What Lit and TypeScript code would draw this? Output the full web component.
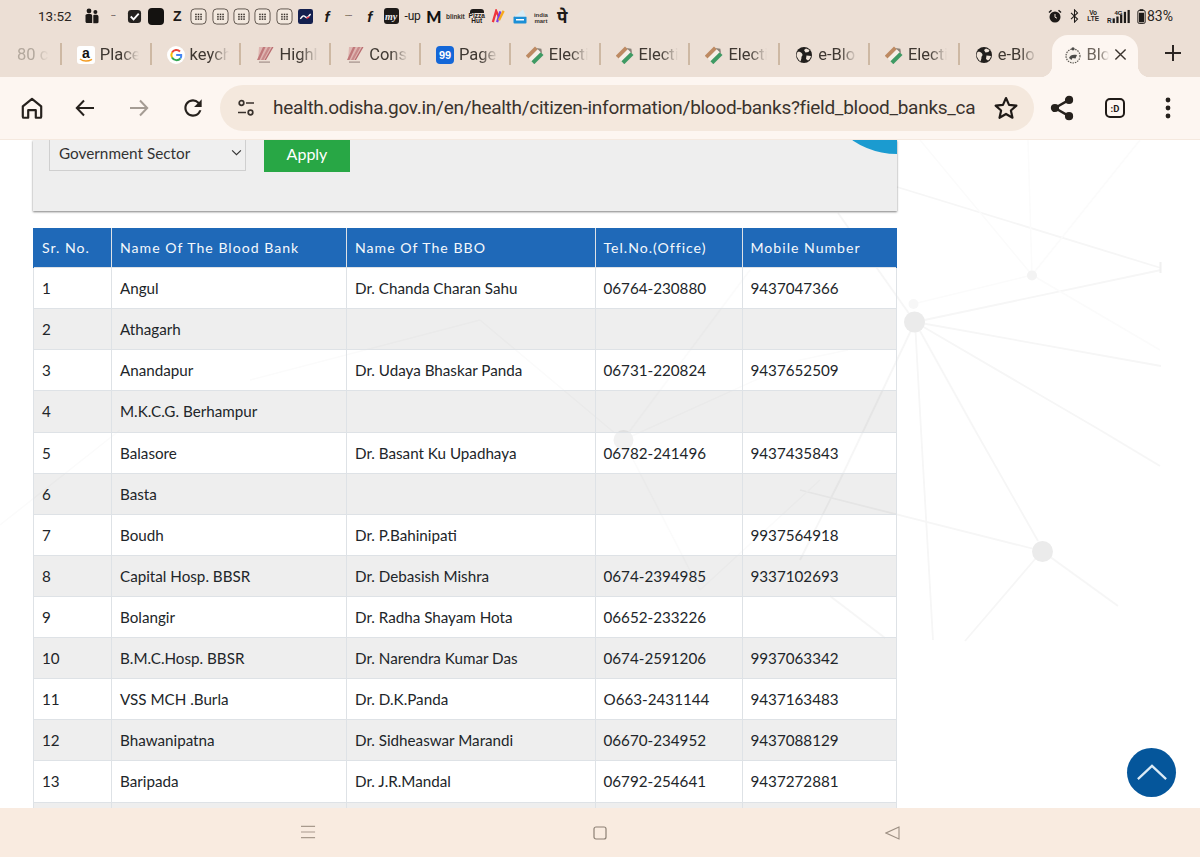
import { LitElement, html, css, svg, nothing } from "lit";
import { customElement } from "lit/decorators.js";

type Row = [string, string, string, string, string];
const rows: Row[] = [
  ["1", "Angul", "Dr. Chanda Charan Sahu", "06764-230880", "9437047366"],
  ["2", "Athagarh", "", "", ""],
  ["3", "Anandapur", "Dr. Udaya Bhaskar Panda", "06731-220824", "9437652509"],
  ["4", "M.K.C.G. Berhampur", "", "", ""],
  ["5", "Balasore", "Dr. Basant Ku Upadhaya", "06782-241496", "9437435843"],
  ["6", "Basta", "", "", ""],
  ["7", "Boudh", "Dr. P.Bahinipati", "", "9937564918"],
  ["8", "Capital Hosp. BBSR", "Dr. Debasish Mishra", "0674-2394985", "9337102693"],
  ["9", "Bolangir", "Dr. Radha Shayam Hota", "06652-233226", ""],
  ["10", "B.M.C.Hosp. BBSR", "Dr. Narendra Kumar Das", "0674-2591206", "9937063342"],
  ["11", "VSS MCH .Burla", "Dr. D.K.Panda", "O663-2431144", "9437163483"],
  ["12", "Bhawanipatna", "Dr. Sidheaswar Marandi", "06670-234952", "9437088129"],
  ["13", "Baripada", "Dr. J.R.Mandal", "06792-254641", "9437272881"],
  ["", "", "", "", ""],
];

const gridBox = html`<svg viewBox="0 0 18 18" width="17" height="17"><rect x="1" y="1" width="16" height="16" rx="4" fill="#f3e9df" stroke="#5a5048" stroke-width="1"/><g fill="#3a332d"><rect x="5.5" y="6" width="1.6" height="1.6"/><rect x="8.2" y="6" width="1.6" height="1.6"/><rect x="10.9" y="6" width="1.6" height="1.6"/><rect x="5.5" y="8.5" width="1.6" height="1.6"/><rect x="8.2" y="8.5" width="1.6" height="1.6"/><rect x="10.9" y="8.5" width="1.6" height="1.6"/><rect x="5.5" y="11" width="1.6" height="1.6"/><rect x="8.2" y="11" width="1.6" height="1.6"/><rect x="10.9" y="11" width="1.6" height="1.6"/></g></svg>`;

const statusIcons = [
  html`<svg viewBox="0 0 14 16" width="14" height="16" fill="#1d1a18"><circle cx="4" cy="3" r="2.4"/><circle cx="10.4" cy="4" r="2"/><path d="M.5 7.5C.5 6 2 6 4 6s3.2.2 3.2 2v7H2c-1 0-1.5-.6-1.5-1.5z"/><path d="M8.3 7.2c.6-.4 1.2-.5 2.1-.5 1.8 0 3.1.3 3.1 2V14c0 .7-.5 1.2-1.2 1.2H8.3z"/></svg>`,
  html`<span class="mini dash">•••••</span>`,
  html`<svg viewBox="0 0 16 16" width="15" height="15"><rect x="1" y="1" width="14" height="14" rx="3.5" fill="#24211f"/><path d="M4 8l3 3 5.5-6" fill="none" stroke="#fff" stroke-width="2"/></svg>`,
  html`<span class="blk"></span>`,
  html`<span class="zed">Z</span>`,
  gridBox, gridBox, gridBox, gridBox, gridBox,
  html`<svg viewBox="0 0 16 16" width="15" height="15"><rect width="16" height="16" rx="2.5" fill="#14204f"/><path d="M2.5 10.5C5 7 6 6.5 8 8.5s3-1 5.5-3" fill="none" stroke="#fff" stroke-width="1.5"/><path d="M9 10l3-1.5" stroke="#e34" stroke-width="1.5"/></svg>`,
  html`<span class="fk">f</span>`,
  html`<span class="mini dash2">•••••••</span>`,
  html`<span class="fk">f</span>`,
  html`<span class="my">my</span>`,
  html`<span class="up">-up</span>`,
  html`<span class="em">M</span>`,
  html`<span class="blinkit">blinkit</span>`,
  html`<span class="pizza"><i></i>Pizza<br />Hut</span>`,
  html`<svg viewBox="0 0 16 16" width="15" height="15"><path d="M2 14L5.5 2 9 10" fill="none" stroke="#f0353b" stroke-width="2.4"/><path d="M6.5 14L10 2.5" stroke="#7a3ee0" stroke-width="2.4"/><path d="M8.5 12L13.5 2" stroke="#f7a81b" stroke-width="2.4"/></svg>`,
  html`<svg viewBox="0 0 16 16" width="16" height="16"><rect x="1.5" y="8.5" width="13" height="7" rx="1" fill="#1c8fd6"/><path d="M2.5 8.5L11 1.5l3 7z" fill="#d7ecf6"/><rect x="4" y="11" width="8" height="1.5" fill="#fff"/></svg>`,
  html`<span class="india"><b>india</b><br /><b>mart</b></span>`,
  html`<span class="pe">पे</span>`,
];

const amazon = html`<svg viewBox="0 0 18 18" width="18" height="18"><rect width="18" height="18" rx="3" fill="#fff"/><text x="9" y="11.5" text-anchor="middle" font-family="Liberation Sans" font-weight="700" font-size="14" fill="#111">a</text><path d="M3 13c3.5 2.6 8 2.6 12 .3" fill="none" stroke="#f39a1f" stroke-width="1.5"/></svg>`;
const google = html`<svg viewBox="0 0 18 18" width="18" height="18"><circle cx="9" cy="9" r="9" fill="#fff"/><path d="M13 5.5A5.2 5.2 0 0 0 5 6.5" fill="none" stroke="#ea4335" stroke-width="2"/><path d="M5 6.5a5.2 5.2 0 0 0 0 5" fill="none" stroke="#fbbc05" stroke-width="2"/><path d="M5 11.5a5.2 5.2 0 0 0 8.5.8" fill="none" stroke="#34a853" stroke-width="2"/><path d="M13.5 12.3A5 5 0 0 0 14.2 9H9.2" fill="none" stroke="#4285f4" stroke-width="2"/></svg>`;
const pinkZ = html`<svg viewBox="0 0 18 18" width="18" height="18"><path d="M3 1h14L9 14H2z" fill="#dfb6b2"/><path d="M7 1h2.5L3.5 14H1z" fill="#c0787a"/><path d="M12 1h2.5L7.5 14H5z" fill="#c98a8a"/><path d="M16 1h1.5L10 14H8.5z" fill="#b96c70"/><rect x="3" y="15.5" width="11" height="1.2" fill="#a3908a"/></svg>`;
const ninetyNine = html`<svg viewBox="0 0 18 18" width="18" height="18"><rect width="18" height="18" rx="4" fill="#1467d8"/><text x="9" y="13" text-anchor="middle" font-family="Liberation Sans" font-weight="700" font-size="11" fill="#fff">99</text></svg>`;
const election = html`<svg viewBox="0 0 18 18" width="18" height="18"><g transform="rotate(45 9 9)"><rect x="3" y="3" width="4" height="13" fill="#bd8a62"/><rect x="7" y="2" width="4" height="14" fill="#f5eee6"/><rect x="11" y="3" width="4" height="13" fill="#3f9a63"/><path d="M5 3l4-3 4 3z" fill="#8b8279"/></g></svg>`;
const globe = html`<svg viewBox="0 0 18 18" width="18" height="18"><circle cx="9" cy="9" r="8" fill="#211e1c"/><path d="M2.5 6C4 5.5 6 6 7 7.5c1.5 2.5-1 2.5-.5 4.5l-1 3.5C3.5 14 1.8 11 1.5 9zM11 2.5l3.5 1.5-1 2-3 .5-1.5-2.5zM11.5 9.5l4.5.5c-.5 2-1.5 3.5-3 4.5l-2-1.500z" fill="#f0e4d9"/></svg>`;
const emblem = html`<svg viewBox="0 0 18 18" width="18" height="18"><circle cx="9" cy="10" r="7" fill="#f6f0ea" stroke="#5a5650" stroke-width="1.2" stroke-dasharray="1.5 1"/><path d="M5 12c1-3 4-4 8-3l-1.5 3.5-3-.5-1 2z" fill="#4b4a48"/><circle cx="9" cy="2.8" r="1.6" fill="#4b4a48"/></svg>`;

const tabs = [
  { ic: nothing, t: "80 c", dim: true },
  { ic: amazon, t: "Place" },
  { ic: google, t: "keych" },
  { ic: pinkZ, t: "Highl" },
  { ic: pinkZ, t: "Consu" },
  { ic: ninetyNine, t: "Page" },
  { ic: election, t: "Electi" },
  { ic: election, t: "Electi" },
  { ic: election, t: "Electi" },
  { ic: globe, t: "e-Blo" },
  { ic: election, t: "Electi" },
  { ic: globe, t: "e-Blo" },
];

const mainLines: [number, number, number, number][] = [
  [897, 187, 1161, 268], [915, 322, 1161, 270], [915, 322, 1161, 366], [915, 322, 921, 430], [921, 430, 933, 640],
  [915, 322, 975, 430], [975, 430, 1038, 541], [915, 322, 1100, 430], [1100, 430, 1160, 466], [915, 322, 838, 213],
  [915, 322, 840, 480], [840, 480, 800, 560], [1042, 551, 800, 490], [1042, 551, 965, 641], [1042, 551, 1118, 606],
  [830, 596, 885, 638],
];
const faintLines: [number, number, number, number][] = [
  [1032, 275, 1028, 140], [1032, 275, 1140, 140], [1032, 275, 913, 304], [1032, 275, 1160, 350], [1032, 275, 920, 140],
  [800, 360, 848, 350], [623, 440, 800, 360], [623, 440, 700, 590], [623, 440, 480, 320], [623, 440, 750, 270],
  [700, 590, 820, 480], [0, 525, 120, 430], [480, 320, 250, 380],
];

@customElement("app-root")
export class AppRoot extends LitElement {
  static styles = css`
    :host { display: flex; flex-direction: column; width: 1200px; height: 857px; overflow: hidden; background: #fff; font-family: Lato, "Noto Sans", sans-serif; color: #212529; }
    .chrome { background: #ecdfd5; flex: none; position: relative; z-index: 3; font-family: Roboto, "Noto Sans", sans-serif; }
    .status { height: 34px; box-sizing: border-box; padding-bottom: 2px; display: flex; align-items: center; padding-left: 38px; color: #2a2522; }
    .time { width: 43px; flex: none; font-size: 13.5px; }
    .slot { width: 21.4px; flex: none; display: flex; align-items: center; justify-content: center; height: 22px; overflow: visible; white-space: nowrap; }
    .mini { font-size: 6px; letter-spacing: -1px; color: #3a332d; font-weight: 700; line-height: 1; }
    .dash { font-size: 4px; letter-spacing: -.6px; }
    .dash2 { font-size: 4px; letter-spacing: -.5px; }
    .blk { width: 16px; height: 17px; border-radius: 4px; background: #141210; display: block; }
    .zed { font: 700 14px "Liberation Sans", sans-serif; color: #1d1a18; }
    .fk { font: italic 700 15px "Liberation Sans", sans-serif; color: #1d1a18; }
    .my { width: 15px; height: 16px; border-radius: 3px; background: #1d1a18; color: #eee; font: italic 700 10px "Liberation Serif", serif; display: flex; align-items: center; justify-content: center; }
    .up { font: 400 12px Roboto, sans-serif; color: #1d1a18; letter-spacing: -.2px; }
    .em { font: 900 16px Lato, sans-serif; color: #111; }
    .blinkit { font: 700 6.5px "Liberation Sans", sans-serif; color: #3a332d; letter-spacing: -.1px; }
    .pizza { font: 700 6.5px/5.5px "Liberation Sans", sans-serif; color: #1d1a18; text-align: center; position: relative; padding-top: 4px; }
    .pizza i { position: absolute; top: 0; left: 1px; right: 1px; height: 4px; background: #1d1a18; border-radius: 3px 3px 0 0; }
    .india { font: 700 6px/6px "Liberation Sans", sans-serif; text-align: center; color: #3a332d; padding-top: 3px; }
    .pe { font: 700 17px "Noto Sans", "DejaVu Sans", sans-serif; color: #1d1a18; }
    .right { margin-left: auto; display: flex; align-items: center; padding-right: 27px; gap: 0; }
    .alarm { margin-right: 8px; display: block; }
    .bt { margin-right: 8px; display: block; }
    .volte { font: 700 6.5px/6.5px "Liberation Sans", sans-serif; color: #2a2522; margin-right: 8px; text-align: center; }
    .sig { display: block; margin-right: 2px; }
    .pct { font-size: 14px; color: #2a2522; margin-left: 1px; }

    .tabs { height: 43px; display: flex; align-items: stretch; margin-left: -28px; }
    .tab { width: 89.8px; flex: none; box-sizing: border-box; display: flex; align-items: center; padding-left: 15px; padding-bottom: 2px; position: relative; gap: 5px; color: #3f3832; font-size: 16.5px; }
    .tab::after { content: ""; position: absolute; right: 0; top: 9px; height: 22px; width: 2px; background: #cdb8a3; }
    .tab.nosep::after { display: none; }
    .tab svg { flex: none; display: block; }
    .lbl { width: 39px; overflow: hidden; white-space: nowrap; -webkit-mask-image: linear-gradient(90deg, #000 55%, transparent 100%); mask-image: linear-gradient(90deg, #000 55%, transparent 100%); }
    .tab.dim { padding-left: 45px; color: #b3a89d; }
    .tab.dim .lbl { width: 32px; }
    .active { width: 86px; flex: none; margin: 1px 0 0 2px; background: #fdf6f1; border-radius: 16px 16px 0 0; display: flex; align-items: center; box-sizing: border-box; padding: 0 8px 3px 12px; gap: 5px; position: relative; color: #6f665e; font-size: 16.5px; }
    .active::before, .active::after { content: ""; position: absolute; bottom: 0; width: 12px; height: 12px; }
    .active::before { left: -12px; background: radial-gradient(circle at 0 0, transparent 12px, #fdf6f1 12.5px); }
    .active::after { right: -12px; background: radial-gradient(circle at 100% 0, transparent 12px, #fdf6f1 12.5px); }
    .active .lbl { width: 22px; flex: none; }
    .active svg { display: block; flex: none; }
    .plus { margin-left: 26px; display: flex; align-items: center; padding-bottom: 5px; }

    .toolbar { height: 63px; background: #fdf6f1; display: flex; align-items: center; box-sizing: border-box; border-bottom: 1px solid #f5e9df; position: relative; padding-bottom: 1px; }
    .tb { width: 54px; flex: none; display: flex; align-items: center; justify-content: center; }
    .tb svg { display: block; }
    .tb.first { margin-left: 5px; margin-right: -1px; }
    .tb.share { margin-left: 1px; }
    .tb.tight { margin-left: -1px; }
    .omni { width: 814px; height: 46px; flex: none; background: #f4e8dd; border-radius: 23px; display: flex; align-items: center; box-sizing: border-box; padding: 0 15px 0 16px; }
    .omni .url { flex: 1; font-size: 19px; color: #3a332d; margin-left: 17px; white-space: nowrap; overflow: hidden; letter-spacing: -.28px; font-family: Roboto, sans-serif; }
    .omni .star { margin-left: 10px; flex: none; }

    main { flex: 1; min-height: 0; position: relative; overflow: hidden; }
    .net { position: absolute; left: 0; top: -140px; width: 1200px; height: 857px; pointer-events: none; }
    .content { position: relative; width: 864px; margin-left: 33px; }
    .panel { height: 71px; background: #eeeeee; box-shadow: 0 1px 2px rgba(0,0,0,.5); margin-bottom: 17px; display: flex; gap: 18px; align-items: flex-start; padding-left: 16px; position: relative; overflow: hidden; }
    .panel .disc { position: absolute; left: 785px; top: -144px; width: 158px; height: 158px; border-radius: 50%; background: #1b9bd0; }
    .sel { position: relative; flex: none; margin-top: -8px; width: 197px; height: 39px; }
    .sel svg { position: absolute; right: 4px; top: 17px; display: block; pointer-events: none; }
    select { appearance: none; -webkit-appearance: none; width: 100%; height: 100%; font: 15.3px Lato, sans-serif; color: #333; background: #efefef; border: 1px solid #cfcfcf; padding: 2px 0 0 9px; box-sizing: border-box; border-radius: 0; }
    .apply { width: 86px; height: 37px; margin-top: -5px; background: #28a745; color: #fff; border: 0; font: 16px Lato, sans-serif; padding: 0; flex: none; }
    .wrapper { height: 600px; overflow: visible; }
    table { width: 862.5px; table-layout: fixed; border-collapse: collapse; font-size: 15.2px; }
    th { background: #1f69b8; color: #f4f8fc; font-weight: 400; letter-spacing: 1px; text-align: left; height: 39px; padding: 0 0 0 8px; border: 1px solid #dee2e6; border-top: 0; border-bottom: 0; box-sizing: border-box; font-size: 14.1px; }
    th:first-child { border-left-color: #1f69b8; }
    th:last-child { border-right-color: #1f69b8; }
    td { height: 41px; padding: 0 0 0 8px; border: 1px solid #dee2e6; box-sizing: border-box; color: #212529; }
    tr.tall td { height: 42px; }
    tr.odd td { background: rgba(0,0,0,.065); }
    .top { position: absolute; left: 1127px; top: 608px; width: 49px; height: 49px; border-radius: 50%; background: #05569b; display: flex; align-items: center; justify-content: center; }
    .top svg { display: block; }
    nav { height: 49px; flex: none; background: #f9ebe0; display: flex; justify-content: center; align-items: center; position: relative; z-index: 3; }
    nav div { width: 292px; display: flex; justify-content: center; }
    nav svg { display: block; }
  `;

  render() {
    return html`
      <div class="chrome">
        <div class="status">
          <span class="time">13:52</span>
          ${statusIcons.map((i) => html`<span class="slot">${i}</span>`)}
          <div class="right">
            <svg class="alarm" viewBox="0 0 14 14" width="14" height="14" fill="#1d1a18"><circle cx="7" cy="8" r="5.5"/><path d="M.5 3L3 .8l1 1L1.5 4zM13.5 3L11 .8l-1 1L12.5 4z"/><path d="M7 5v3.2l2 1" stroke="#ecdfd5" fill="none"/></svg>
            <svg class="bt" viewBox="0 0 10 16" width="9" height="14" fill="none" stroke="#1d1a18" stroke-width="1.2"><path d="M1 4.5l7.5 7L5 15V1l3.5 3.5L1 11.5"/></svg>
            <span class="volte">Vo<br />LTE</span>
            <svg class="sig" viewBox="0 0 30 16" width="28" height="15" fill="#1d1a18"><rect x="6" y="10" width="2.4" height="5"/><rect x="10" y="8" width="2.4" height="7"/><rect x="14" y="6" width="2.4" height="9"/><rect x="18" y="3" width="2.4" height="12"/><rect x="22" y="1" width="2.4" height="14"/><text x="0" y="15" font-family="Liberation Sans" font-size="7" font-weight="700">R</text><text x="8" y="6" font-family="Liberation Sans" font-size="6.5" font-weight="700">4G</text></svg>
            <svg viewBox="0 0 9 16" width="9" height="15"><rect x="2.5" y=".2" width="4" height="2" fill="#1d1a18"/><rect x=".6" y="1.6" width="7.8" height="13.8" rx="1.5" fill="none" stroke="#1d1a18" stroke-width="1"/><rect x="1.8" y="4" width="5.4" height="10.2" fill="#1d1a18"/></svg>
            <span class="pct">83%</span>
          </div>
        </div>
        <div class="tabs">
          ${tabs.map((t, i) => html`<div class="tab ${t.dim ? "dim" : ""} ${i === tabs.length - 1 ? "nosep" : ""}">${t.ic}<span class="lbl">${t.t}</span></div>`)}
          <div class="active">
            ${emblem}<span class="lbl">Block</span>
            <svg viewBox="0 0 14 14" width="13" height="13" fill="none" stroke="#3a332d" stroke-width="1.5"><path d="M1.5 1.5l11 11M12.5 1.5l-11 11"/></svg>
          </div>
          <div class="plus"><svg viewBox="0 0 18 18" width="18" height="18" stroke="#2b2522" stroke-width="2"><path d="M9 1v16M1 9h16"/></svg></div>
        </div>
        <div class="toolbar">
          <div class="tb first"><svg viewBox="0 0 24 24" width="26" height="26" fill="none" stroke="#26211d" stroke-width="2" stroke-linejoin="round"><path d="M3.5 10.5L12 3.5l8.5 7V20a1 1 0 0 1-1 1H15.5v-7h-7v7H4.5a1 1 0 0 1-1-1z"/></svg></div>
          <div class="tb"><svg viewBox="0 0 24 24" width="24" height="24" fill="none" stroke="#26211d" stroke-width="2"><path d="M21 12H4M11 4.5L3.8 12l7.2 7.5"/></svg></div>
          <div class="tb"><svg viewBox="0 0 24 24" width="24" height="24" fill="none" stroke="#a59c94" stroke-width="2"><path d="M3 12h17M13 4.5l7.2 7.5-7.2 7.5"/></svg></div>
          <div class="tb"><svg viewBox="0 0 24 24" width="26" height="26" fill="#26211d"><path d="M17.65 6.35A7.958 7.958 0 0 0 12 4c-4.42 0-7.99 3.58-7.99 8s3.57 8 7.99 8c3.73 0 6.84-2.55 7.73-6h-2.08A5.99 5.99 0 0 1 12 18c-3.31 0-6-2.69-6-6s2.69-6 6-6c1.66 0 3.14.69 4.22 1.78L13 11h7V4l-2.35 2.35z"/></svg></div>
          <div class="omni">
            <svg viewBox="0 0 20 20" width="20" height="20" fill="none" stroke="#38312c" stroke-width="1.7"><circle cx="5.5" cy="5" r="2.3"/><path d="M10 5h8M2 14.5h8"/><circle cx="14.5" cy="14.5" r="2.3"/></svg>
            <span class="url">health.odisha.gov.in/en/health/citizen-information/blood-banks?field_blood_banks_ca</span>
            <svg class="star" viewBox="0 0 24 24" width="26" height="26" fill="none" stroke="#1f1a17" stroke-width="2" stroke-linejoin="round"><path d="M12 2.8l2.8 6.3 6.8.7-5.1 4.5 1.5 6.7-6-3.5-6 3.5 1.500-6.700L2.400 9.800l6.800-.7z"/></svg>
          </div>
          <div class="tb share"><svg viewBox="0 0 24 24" width="26" height="26" fill="none" stroke="#26211d" stroke-width="2.2"><path d="M18.5 4.5L5.5 12l13 7.5"/><circle cx="18.5" cy="4.5" r="2.7" fill="#26211d"/><circle cx="5.5" cy="12" r="2.7" fill="#26211d"/><circle cx="18.5" cy="19.5" r="2.7" fill="#26211d"/></svg></div>
          <div class="tb tight"><svg viewBox="0 0 22 22" width="22" height="22" fill="none"><rect x="2" y="2" width="18" height="18" rx="4" stroke="#1f1a17" stroke-width="2"/><text x="11" y="15" text-anchor="middle" font-family="Roboto" font-weight="700" font-size="9.5" fill="#1f1a17">:D</text></svg></div>
          <div class="tb tight"><svg viewBox="0 0 6 24" width="6" height="24" fill="#26211d"><circle cx="3" cy="4" r="2.4"/><circle cx="3" cy="12" r="2.4"/><circle cx="3" cy="20" r="2.4"/></svg></div>
        </div>
      </div>
      <main>
        <svg class="net" viewBox="0 0 1200 857">
          ${mainLines.map((l) => svg`<line x1=${l[0]} y1=${l[1]} x2=${l[2]} y2=${l[3]} stroke="#f6f6f6" stroke-width="1.8"/>`)}
          ${faintLines.map((l) => svg`<line x1=${l[0]} y1=${l[1]} x2=${l[2]} y2=${l[3]} stroke="#fbfbfb" stroke-width="1.5"/>`)}
          <rect x="1159.5" y="262" width="2" height="11" fill="#f0f0f0"/>
          <circle cx="914.5" cy="322" r="10.5" fill="#ebebeb"/>
          <circle cx="1042.5" cy="551.5" r="10.5" fill="#ebebeb"/>
          <circle cx="1032" cy="275.5" r="5" fill="#f3f3f3"/>
          <circle cx="913.5" cy="304" r="5" fill="#f7f7f7"/>
          <circle cx="623.5" cy="440" r="10" fill="#f1f1f1"/>
        </svg>
        <div class="content">
          <div class="panel">
            <div class="disc"></div>
            <div class="sel">
              <select><option>Government Sector</option></select>
              <svg viewBox="0 0 12 8" width="11" height="7" fill="none" stroke="#333" stroke-width="1.3"><path d="M1 1.5l5 5 5-5"/></svg>
            </div>
            <button class="apply">Apply</button>
          </div>
          <div class="wrapper">
            <table>
              <colgroup><col style="width:78px" /><col style="width:235px" /><col style="width:248.5px" /><col style="width:147px" /><col style="width:154px" /></colgroup>
              <thead><tr><th>Sr. No.</th><th>Name Of The Blood Bank</th><th>Name Of The BBO</th><th>Tel.No.(Office)</th><th>Mobile Number</th></tr></thead>
              <tbody>
                ${rows.map((r, i) => html`<tr class="${i % 2 ? "odd" : ""} ${i === 3 || i === 12 ? "tall" : ""}">${r.map((c) => html`<td>${c}</td>`)}</tr>`)}
              </tbody>
            </table>
          </div>
        </div>
        <div class="top"><svg viewBox="0 0 34 20" width="32" height="19" fill="none" stroke="#dcebf6" stroke-width="2.4"><path d="M2 17L17 3l15 14"/></svg></div>
      </main>
      <nav>
        <div><svg viewBox="0 0 16 16" width="15" height="15" stroke="#a99a8d" stroke-width="1.2"><path d="M0 1.5h15M0 7.5h15M0 13.5h15"/></svg></div>
        <div><svg viewBox="0 0 14 14" width="14" height="14" fill="none" stroke="#8d8074" stroke-width="1.2"><rect x="1" y="1" width="12" height="12" rx="2"/></svg></div>
        <div><svg viewBox="0 0 15 14" width="15" height="14" fill="none" stroke="#9d8f83" stroke-width="1.1"><path d="M14 1L1 7l13 6z"/></svg></div>
      </nav>
    `;
  }
}
